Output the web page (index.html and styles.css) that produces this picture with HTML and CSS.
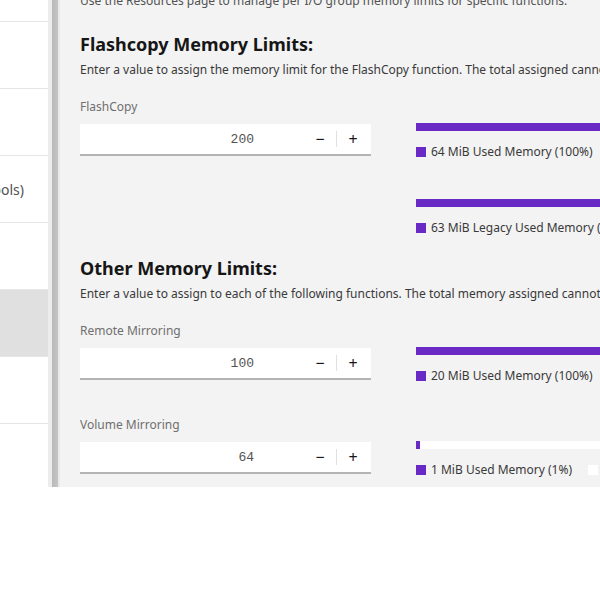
FILE: index.html
```html
<!DOCTYPE html>
<html lang="en">
  <head>
    <meta charset="UTF-8" />
    <meta name="viewport" content="width=device-width, initial-scale=1.0" />
    <title>Memory Limits</title>
    <link rel="stylesheet" href="styles.css">
  </head>
  <body>
    <div class="app">
      <div class="sidebar">
        <ul class="nav-list">
          <li class="nav-item">Overview</li>
          <li class="nav-item">Network</li>
          <li class="nav-item">Security</li>
          <li class="nav-item">Easy Tier (Pools)</li>
          <li class="nav-item">Support</li>
          <li class="nav-item active">Resources</li>
          <li class="nav-item">Licensing</li>
          <li class="nav-item">GUI</li>
        </ul>
      </div>
      <div class="splitter"></div>

      <div class="main">
        <div class="content">
          <p class="intro">
            Use the Resources page to manage per I/O group memory limits for specific functions.
          </p>

          <!-- FlashCopy -->
          <div class="section">
            <h2 class="section-title">Flashcopy Memory Limits:</h2>
            <p class="section-desc">
              Enter a value to assign the memory limit for the FlashCopy function. The total assigned cannot exceed the available memory.
            </p>

            <div class="field">
              <label class="field-label">FlashCopy</label>
              <div class="field-row">
                <div class="number-input">
                  <input type="text" value="200" />
                  <button class="step-btn">&minus;</button>
                  <span class="step-divider"></span>
                  <button class="step-btn">+</button>
                </div>
                <div class="meters">
                  <div class="meter">
                    <div class="meter-track"><div class="meter-fill" style="width: 100%"></div></div>
                    <div class="legend">
                      <span class="legend-item"><span class="swatch"></span>64 MiB Used Memory (100%)</span>
                    </div>
                  </div>
                  <div class="meter">
                    <div class="meter-track"><div class="meter-fill" style="width: 100%"></div></div>
                    <div class="legend">
                      <span class="legend-item"><span class="swatch"></span>63 MiB Legacy Used Memory (100%)</span>
                    </div>
                  </div>
                </div>
              </div>
            </div>
          </div>

          <!-- Other -->
          <div class="section">
            <h2 class="section-title">Other Memory Limits:</h2>
            <p class="section-desc">
              Enter a value to assign to each of the following functions. The total memory assigned cannot exceed the available memory.
            </p>

            <div class="field">
              <label class="field-label">Remote Mirroring</label>
              <div class="field-row">
                <div class="number-input">
                  <input type="text" value="100" />
                  <button class="step-btn">&minus;</button>
                  <span class="step-divider"></span>
                  <button class="step-btn">+</button>
                </div>
                <div class="meters">
                  <div class="meter">
                    <div class="meter-track"><div class="meter-fill" style="width: 100%"></div></div>
                    <div class="legend">
                      <span class="legend-item"><span class="swatch"></span>20 MiB Used Memory (100%)</span>
                    </div>
                  </div>
                </div>
              </div>
            </div>

            <div class="field">
              <label class="field-label">Volume Mirroring</label>
              <div class="field-row">
                <div class="number-input">
                  <input type="text" value="64" />
                  <button class="step-btn">&minus;</button>
                  <span class="step-divider"></span>
                  <button class="step-btn">+</button>
                </div>
                <div class="meters">
                  <div class="meter">
                    <div class="meter-track"><div class="meter-fill" style="width: 1%"></div></div>
                    <div class="legend">
                      <span class="legend-item"><span class="swatch"></span>1 MiB Used Memory (1%)</span>
                      <span class="legend-item"><span class="swatch free"></span>63 MiB Free Memory (99%)</span>
                    </div>
                  </div>
                </div>
              </div>
            </div>
          </div>
        </div>
      </div>
    </div>
  </body>
</html>
```

FILE: styles.css
```css
body {
  font-family: "Noto Sans", sans-serif;
  margin: 0;
  padding: 0;
  background-color: #fff;
  color: #161616;
}
.app {
  display: flex;
  height: 487px;
  overflow: hidden;
}
.sidebar {
  width: 48px;
  flex-shrink: 0;
  overflow: hidden;
  background-color: #fff;
}
.nav-list {
  list-style: none;
  margin: -45px 0 0 -98px;
  padding: 0;
  width: 146px;
}
.nav-item {
  height: 66px;
  border-bottom: 1px solid #e6e6e6;
  display: flex;
  align-items: center;
  padding-left: 16px;
  font-size: 14px;
  color: #525252;
  white-space: nowrap;
}
.nav-item.active {
  background-color: #e0e0e0;
}
.splitter {
  width: 12px;
  flex-shrink: 0;
  background: linear-gradient(
    to right,
    #ececec 0,
    #ececec 4px,
    #b9b9b9 4px,
    #c4c4c4 10px,
    #e9e9e9 10px
  );
}
.main {
  flex: 1;
  overflow: hidden;
  background-color: #f3f3f3;
}
.content {
  width: 780px;
  padding-left: 20px;
  margin-top: -7px;
}
.intro {
  margin: 0;
  font-size: 12px;
  line-height: 16px;
  color: #525252;
  white-space: nowrap;
}
.section {
  margin-top: 23px;
}
.section + .section {
  margin-top: 21px;
}
.section-title {
  margin: 0;
  font-size: 18px;
  line-height: 24px;
  font-weight: 700;
  color: #161616;
}
.section-desc {
  margin: 6px 0 0;
  font-size: 12px;
  line-height: 16px;
  color: #393939;
  white-space: nowrap;
}
.field {
  margin-top: 21px;
}
.field + .field {
  margin-top: 34px;
}
.field-label {
  display: block;
  font-size: 12px;
  line-height: 16px;
  color: #6f6f6f;
  margin-bottom: 9px;
}
.field-row {
  display: grid;
  grid-template-columns: 291px 1fr;
  column-gap: 45px;
  align-items: start;
}
.number-input {
  display: flex;
  align-items: center;
  height: 30px;
  padding-right: 2px;
  background-color: #fff;
  border-bottom: 2px solid #b4b4b4;
}
.number-input input {
  flex: 1;
  min-width: 0;
  height: 100%;
  border: none;
  background: transparent;
  text-align: right;
  padding: 0 50px 0 0;
  font-family: "Liberation Mono", monospace;
  font-size: 13px;
  color: #525252;
  box-sizing: border-box;
}
.step-btn {
  width: 32px;
  height: 100%;
  border: none;
  background: transparent;
  font-family: "Noto Sans", sans-serif;
  font-size: 16px;
  color: #161616;
  padding: 0;
  cursor: pointer;
}
.step-divider {
  width: 1px;
  height: 16px;
  background-color: #e0e0e0;
}
.meters {
  display: flex;
  flex-direction: column;
  gap: 40px;
  margin-top: -1px;
}
.meter-track {
  height: 8px;
  background-color: #fff;
}
.meter-fill {
  height: 100%;
  min-width: 3px;
  background-color: #6929c4;
}
.legend {
  display: flex;
  gap: 16px;
  margin-top: 14px;
  font-size: 12px;
  line-height: 14px;
  color: #393939;
  white-space: nowrap;
}
.legend-item {
  display: flex;
  align-items: center;
}
.swatch {
  width: 10px;
  height: 10px;
  margin-right: 5px;
  background-color: #6929c4;
}
.swatch.free {
  background-color: #fff;
}
```
